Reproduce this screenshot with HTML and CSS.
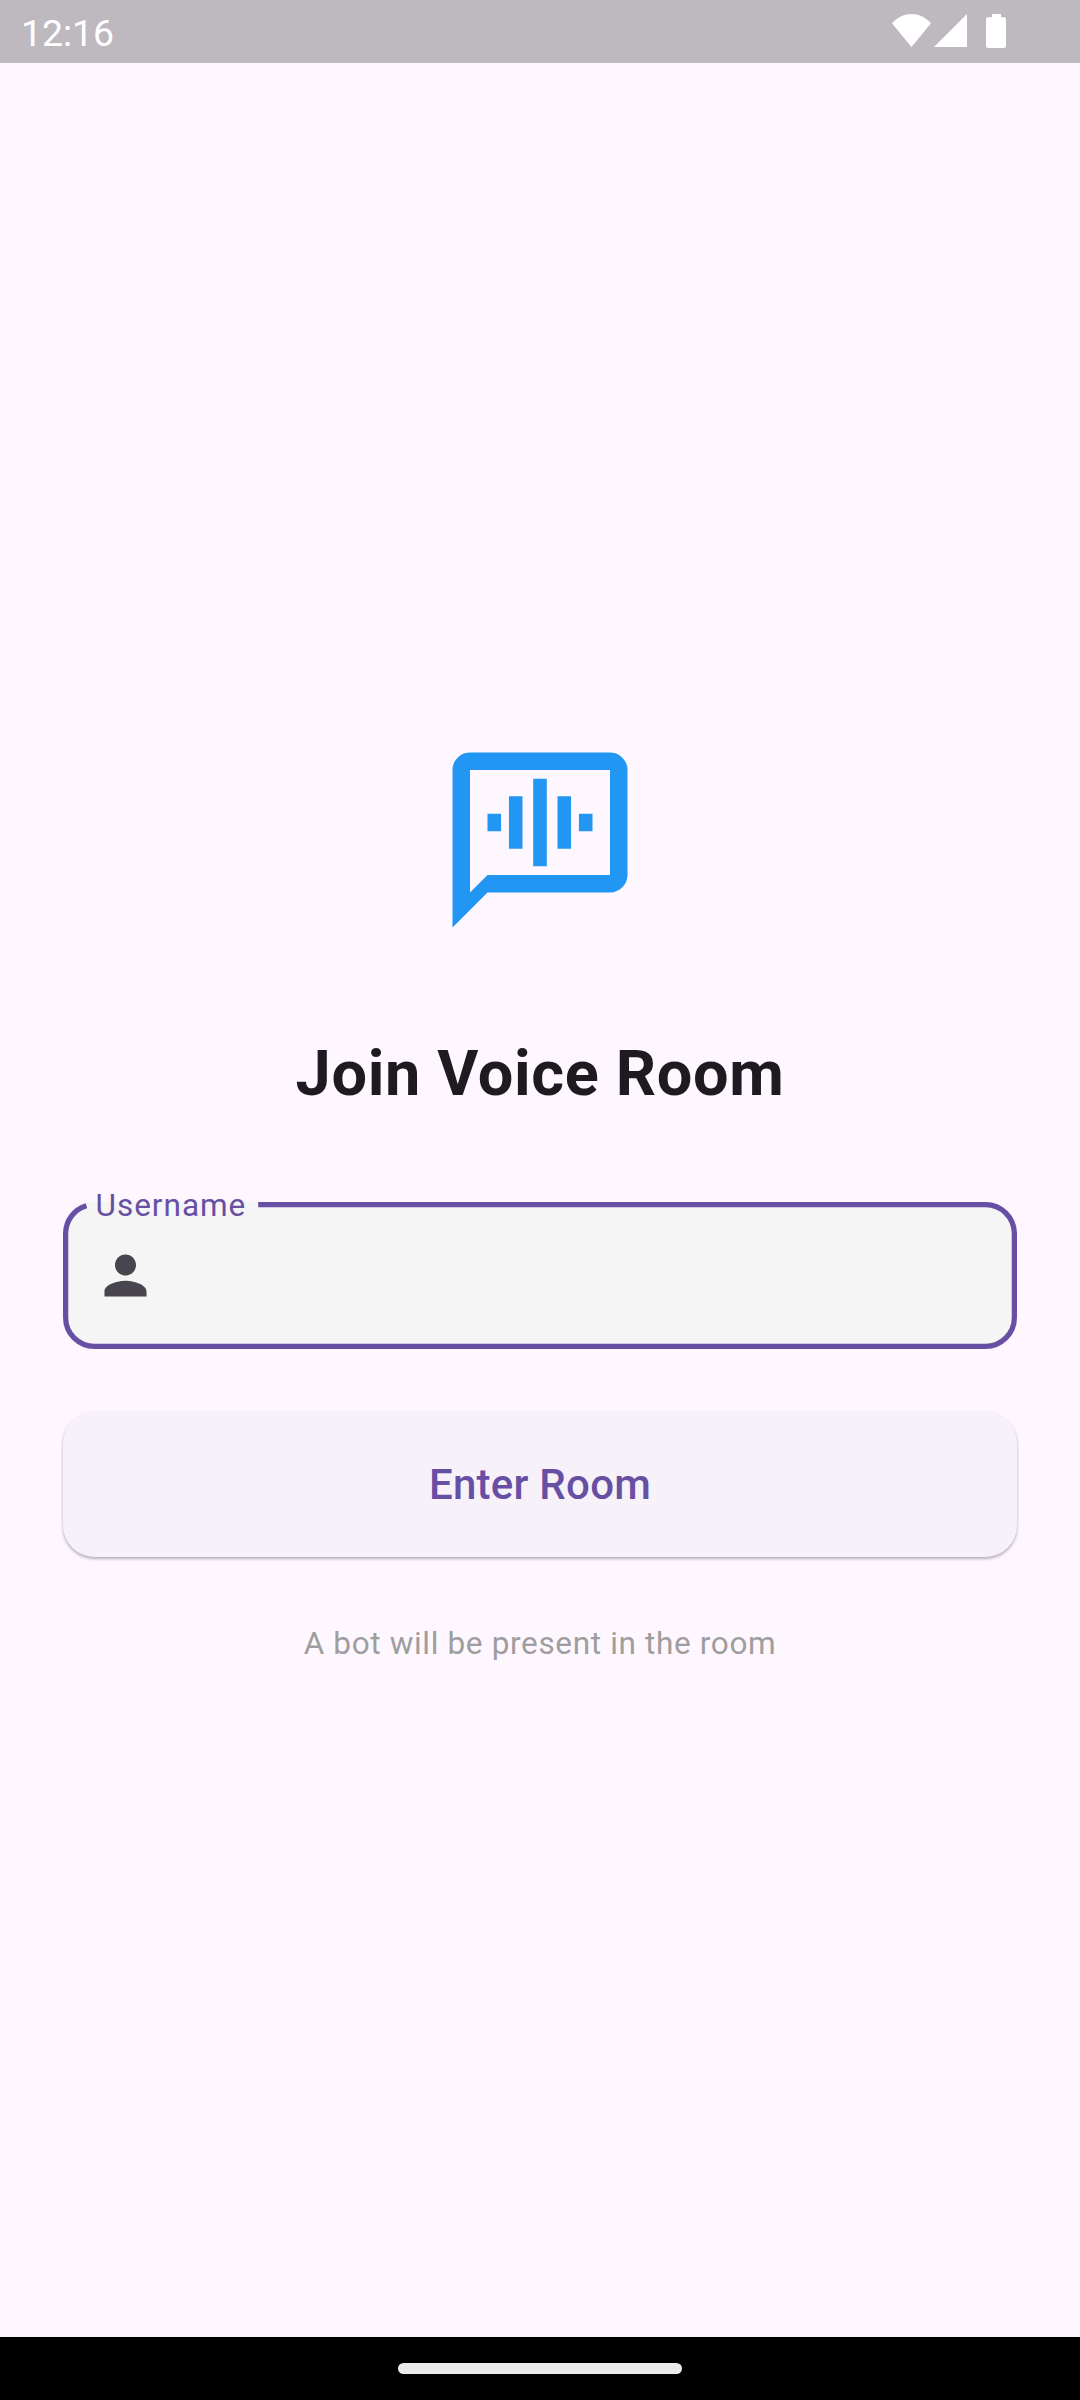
FILE: index.html
```html
<!DOCTYPE html>
<html lang="en">
<head>
<meta charset="utf-8">
<title>Join Voice Room</title>
<link rel="stylesheet" href="styles.css">
</head>
<body>
<header class="status-bar">
  <span class="clock">12:16</span>
  <svg class="status-icons" width="120" height="36" viewBox="0 0 120 36" fill="#fff">
    <path d="M0 9.3C11.500-3 27.500-3 39 9.3L19.500 33Z"/>
    <path d="M42 33L75 0V33Z"/>
    <path d="M100 0h9v3.3h3.2a1.8 1.8 0 0 1 1.8 1.8v27a1.8 1.8 0 0 1-1.8 1.8H95.800a1.800 1.800 0 0 1-1.800-1.800v-27a1.800 1.800 0 0 1 1.800-1.800h4.200Z"/>
  </svg>
</header>
<main class="screen">
  <svg class="voice-icon" viewBox="0 0 24 24" fill="#2196f3">
    <path fill-rule="evenodd" d="M20 2H4C2.900 2 2 2.900 2 4V22L6 18H20C21.100 18 22 17.100 22 16V4C22 2.900 21.100 2 20 2ZM20 16H6L4 18V4H20Z"/>
    <path d="M6 9h1.550v2H6zM8.450 7H10v6H8.450zM11.225 5h1.550v10h-1.550zM14 7h1.550v6H14zM16.450 9H18v2h-1.550z"/>
  </svg>
  <h1 class="title">Join Voice Room</h1>
  <div class="field">
    <svg class="person-icon" viewBox="0 0 24 24" fill="#49454f">
      <path d="M12 12c2.210 0 4-1.790 4-4s-1.790-4-4-4-4 1.790-4 4 1.790 4 4 4zm0 2c-2.670 0-8 1.340-8 4v2h16v-2c0-2.660-5.330-4-8-4z"/>
    </svg>
    <svg class="outline" viewBox="0 0 954 147" fill="none" stroke="#6750a4" stroke-width="5.250">
      <path d="M195.200 2.625H922.500A28.875 28.875 0 0 1 951.375 31.500V115.500A28.875 28.875 0 0 1 922.500 144.375H31.500A28.875 28.875 0 0 1 2.625 115.500V31.500A28.875 28.875 0 0 1 23.500 3.750"/>
    </svg>
    <label class="label" for="username">Username</label>
    <input class="input" id="username" type="text">
  </div>
  <button class="enter" type="button">Enter Room</button>
  <p class="note">A bot will be present in the room</p>
</main>
<footer class="nav-bar"><div class="handle"></div></footer>
</body>
</html>
```
FILE: styles.css
```css
* {
  box-sizing: border-box;
}

body {
  margin: 0;
  height: 2400px;
  display: flex;
  flex-direction: column;
  background: #fef7ff;
  font-family: Roboto, "Noto Sans", sans-serif;
}

.status-bar {
  height: 63px;
  padding: 0 72px 0 21px;
  display: flex;
  justify-content: space-between;
  align-items: flex-start;
  background: #beb9bf;
  color: #fff;
}

.clock {
  padding-top: 11px;
  font-size: 37.4px;
  line-height: 45px;
}

.status-icons {
  margin-top: 14px;
  margin-right: -4px;
}

.screen {
  flex: 1;
  padding: 672px 63px 0;
  display: flex;
  flex-direction: column;
  align-items: center;
}

.voice-icon {
  width: 210px;
  height: 210px;
  flex: none;
}

.title {
  margin: 84px 0 0;
  font-size: 63px;
  line-height: 90px;
  font-weight: 700;
  letter-spacing: 0.656px;
  color: #1d1b20;
  white-space: nowrap;
}

.field {
  position: relative;
  width: 954px;
  height: 147px;
  margin-top: 83.25px;
  padding-left: 31px;
  display: flex;
  align-items: center;
  border-radius: 31.5px;
  background: #f5f5f5;
}

.person-icon {
  width: 63px;
  height: 63px;
}

.outline {
  position: absolute;
  left: 0;
  top: 0;
  width: 954px;
  height: 147px;
}

.label {
  position: absolute;
  left: 32.5px;
  top: -16px;
  font-size: 31.5px;
  line-height: 40px;
  letter-spacing: 0.984px;
  color: #6750a4;
}

.input {
  flex: 1;
  margin: 0 31px;
  border: 0;
  outline: 0;
  background: transparent;
  font: inherit;
  font-size: 42px;
}

.enter {
  width: 954px;
  height: 144.4px;
  margin: 63px 0 0;
  padding: 0;
  border: 0;
  border-radius: 31.5px;
  background: #f7f2fa;
  box-shadow: 0 2px 3px rgba(0, 0, 0, 0.26), 0 1px 4px rgba(0, 0, 0, 0.06);
  font: 500 42px/63px Roboto, "Noto Sans", sans-serif;
  letter-spacing: 0.2625px;
  color: #6750a4;
}

.note {
  margin: 64px 0 0;
  font-size: 31.5px;
  line-height: 45px;
  letter-spacing: 0.656px;
  color: #9e9e9e;
}

.nav-bar {
  height: 63px;
  display: flex;
  justify-content: center;
  align-items: center;
  background: #000;
}

.handle {
  width: 284px;
  height: 11px;
  border-radius: 5.5px;
  background: #ebebeb;
}
```
